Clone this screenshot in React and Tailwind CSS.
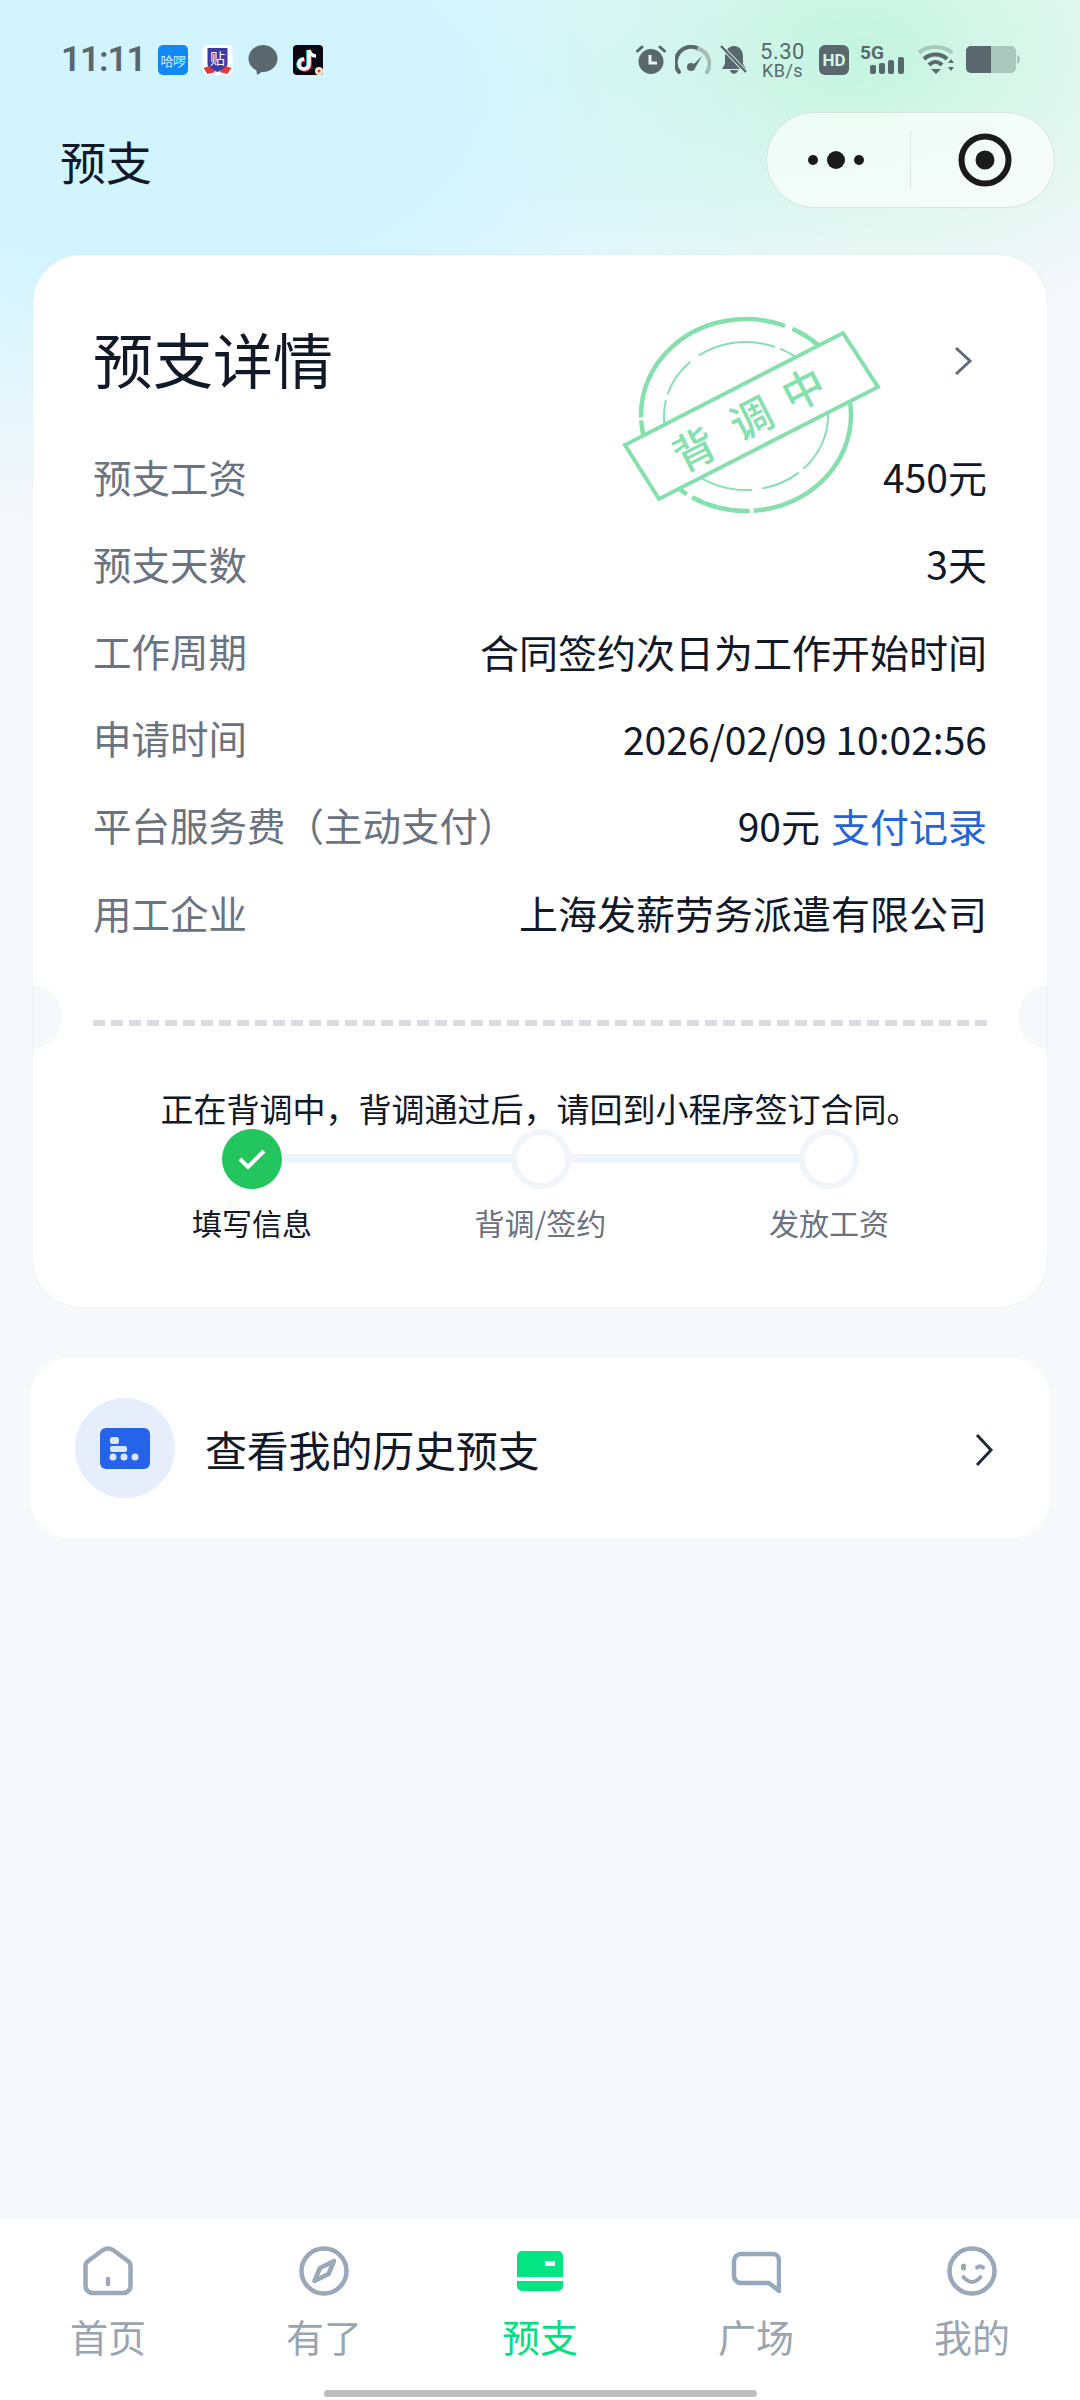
const font = "font-['Noto_Sans_CJK_SC','Noto_Sans',sans-serif]";

function AlarmIcon() {
  return (
    <svg width="30" height="30" viewBox="0 0 30 30" className="shrink-0">
      <circle cx="15" cy="16.5" r="12.5" fill="#59686c" />
      <path d="M1.5 6 L6 2 M28.5 6 L24 2" stroke="#59686c" strokeWidth="3" strokeLinecap="round" />
      <path d="M14 10 V18 H21" stroke="#e3f7f3" strokeWidth="3" fill="none" />
    </svg>
  );
}
function GaugeIcon() {
  return (
    <svg width="36" height="30" viewBox="0 0 36 30" className="shrink-0">
      <path d="M4 27 A15.5 15.5 0 0 1 24 4" stroke="#59686c" strokeWidth="4" fill="none" strokeLinecap="round" />
      <path d="M24 4 A15.5 15.5 0 0 1 32 27" stroke="#a6bdb6" strokeWidth="4" fill="none" strokeLinecap="round" />
      <path d="M14 24 L27 11 L19 25 Z" fill="#59686c" />
      <circle cx="16" cy="22" r="4" fill="#59686c" />
    </svg>
  );
}
function BellIcon() {
  return (
    <svg width="28" height="30" viewBox="0 0 28 30" className="shrink-0">
      <path d="M14 1 C20 1 23 6 23 12 V19 L26 24 H2 L5 19 V12 C5 6 8 1 14 1 Z" fill="#59686c" />
      <path d="M10 25 C11 30 17 30 18 25 Z" fill="#59686c" />
      <path d="M2 2 L27 28" stroke="#d2f5e9" strokeWidth="4" />
      <path d="M1 1 L26 27" stroke="#59686c" strokeWidth="2.4" />
    </svg>
  );
}
function SignalIcon() {
  return (
    <svg width="45" height="36" viewBox="0 -4 45 36" className="shrink-0">
      <text x="0" y="15" fontSize="19" fontWeight="700" fill="#59686c" fontFamily="Roboto, sans-serif">5G</text>
      <rect x="10" y="21" width="6" height="9" rx="2" fill="#59686c" />
      <rect x="19" y="19" width="6" height="11" rx="2" fill="#59686c" />
      <rect x="28" y="16" width="6" height="14" rx="2" fill="#59686c" />
      <rect x="38" y="13" width="6" height="17" rx="2" fill="#59686c" />
    </svg>
  );
}
function WifiIcon() {
  return (
    <svg width="37" height="30" viewBox="0 0 37 30" className="shrink-0">
      <path d="M1 8 C9 0 26 0 34 8" stroke="#a6c9bd" strokeWidth="4" fill="none" />
      <path d="M6 14 C12 8 23 8 29 14" stroke="#59686c" strokeWidth="4" fill="none" />
      <path d="M11 20 C15 16 20 16 24 20" stroke="#59686c" strokeWidth="4" fill="none" />
      <path d="M13 24 H23 L18 29 Z" fill="#59686c" />
      <path d="M30 18 L33 14 L36 18 Z M30 22 H36 L33 26 Z" fill="#59686c" />
    </svg>
  );
}
function BatteryIcon() {
  return (
    <svg width="54" height="28" viewBox="0 0 54 28" className="shrink-0">
      <rect x="0" y="0" width="50" height="27" rx="5" fill="#a9c7bc" />
      <path d="M5 0 H25 V27 H5 A5 5 0 0 1 0 22 V5 A5 5 0 0 1 5 0 Z" fill="#59686c" />
      <path d="M51 9 C53 10 54 11 54 13.5 C54 16 53 17 51 18 Z" fill="#a9c7bc" />
    </svg>
  );
}

function StatusBar() {
  return (
    <div className="h-[112px] pt-[45px] pl-[61px] pr-[60px] flex items-start justify-between shrink-0">
      <div className="flex items-center h-[30px]">
        <span className="w-[97px] text-[35px] leading-[32px] font-semibold tracking-[-1px] text-[#59686c] font-['Roboto',sans-serif] whitespace-nowrap">11:11</span>
        <div className="w-[30px] h-[30px] rounded-[5px] bg-[#1189f5] flex items-center justify-center text-[13px] tracking-[-0.5px] leading-none text-[#cdeaff] mr-[14px] whitespace-nowrap">哈啰</div>
        <svg width="31" height="30" viewBox="0 0 30 30" className="mr-[15px] shrink-0">
          <rect width="30" height="30" rx="5" fill="#ffffff" />
          <path d="M5 3 H25 V19 C25 23 19 25 15 27 C11 25 5 23 5 19 Z" fill="#3f3ba5" />
          <path d="M1 23 L7 21 L13 27 L5 29 Z M29 23 L23 21 L17 27 L25 29 Z" fill="#e23a3a" />
          <text x="15" y="19" textAnchor="middle" fontSize="15" fill="#ffffff">贴</text>
        </svg>
        <svg width="30" height="30" viewBox="0 0 30 30" className="mr-[15px] shrink-0">
          <ellipse cx="15" cy="13.5" rx="14.5" ry="13.5" fill="#59686c" />
          <path d="M8 22 L9 30 L17 25 Z" fill="#59686c" />
        </svg>
        <svg width="30" height="30" viewBox="0 0 30 30" className="shrink-0">
          <rect width="30" height="30" rx="4" fill="#0b0710" />
          <path d="M16 5 V19 A5 5 0 1 1 11 14" stroke="#25f4ee" strokeWidth="3.5" fill="none" transform="translate(-1 0)" />
          <path d="M16 5 V19 A5 5 0 1 1 11 14" stroke="#fe2c55" strokeWidth="3.5" fill="none" transform="translate(1 1)" />
          <path d="M16 5 V19 A5 5 0 1 1 11 14 M16 5 C17 9 20 11 23 11" stroke="#ffffff" strokeWidth="3.5" fill="none" />
          <circle cx="26" cy="26" r="4" fill="#ffe9d4" />
          <circle cx="26" cy="26" r="1.5" fill="#e23a3a" />
        </svg>
      </div>
      <div className="flex items-center h-[30px]">
        <AlarmIcon />
        <div className="ml-[9px]"><GaugeIcon /></div>
        <div className="ml-[9px]"><BellIcon /></div>
        <div className="ml-[11px] w-[47px] flex flex-col items-center text-[#59686c] font-['Roboto',sans-serif]">
          <span className="text-[22px] leading-[21px] tracking-[0.5px]">5.30</span>
          <span className="text-[18px] leading-[17px] tracking-[0.5px]">KB/s</span>
        </div>
        <div className="ml-[13px] w-[30px] h-[30px] rounded-[6px] bg-[#59686c] flex items-center justify-center text-[17px] leading-none font-bold text-[#d2f5e9] font-['Roboto',sans-serif]">HD</div>
        <div className="ml-[11px] mb-[4px]"><SignalIcon /></div>
        <div className="ml-[13px]"><WifiIcon /></div>
        <div className="ml-[11px]"><BatteryIcon /></div>
      </div>
    </div>
  );
}

function NavBar() {
  return (
    <div className="h-[143px] shrink-0 pl-[60px] pr-[25px] flex items-start justify-between">
      <span className="text-[46px] leading-[96px] text-[#111827]">预支</span>
      <div className="w-[289px] h-[96px] rounded-full bg-white/65 border border-[#d5e6e0] flex items-center">
        <div className="w-[143px] flex justify-center pr-[5px]">
          <svg width="60" height="20" viewBox="0 0 60 20">
            <circle cx="7" cy="10" r="5" fill="#1a1a1a" />
            <circle cx="30" cy="10" r="9" fill="#1a1a1a" />
            <circle cx="53" cy="10" r="5" fill="#1a1a1a" />
          </svg>
        </div>
        <div className="w-px h-[58px] bg-[#dbe6e2]" />
        <div className="flex-1 flex justify-center pl-[4px]">
          <svg width="54" height="54" viewBox="0 0 54 54">
            <circle cx="27" cy="27" r="23.5" stroke="#1a1a1a" strokeWidth="6" fill="none" />
            <circle cx="27" cy="27" r="9.5" fill="#1a1a1a" />
          </svg>
        </div>
      </div>
    </div>
  );
}

function Stamp() {
  const c = "#86e0ae";
  return (
    <svg width="270" height="210" viewBox="620 312 270 210" className="absolute left-[587px] top-[57px]">
      <ellipse cx="746" cy="415" rx="105" ry="96" stroke={c} strokeWidth="4.5" fill="none" strokeDasharray="150 4 60 6 90 3 200 8" />
      <ellipse cx="746" cy="416" rx="82" ry="74" stroke={c} strokeWidth="2" fill="none" strokeDasharray="60 6 40 10 80 5" />
      <polygon points="625,445 843,333 878,387 659,499" fill="#ffffff" stroke={c} strokeWidth="4" />
      <text x="693" y="447" fontSize="42" fill={c} textAnchor="middle" dominantBaseline="central" fontWeight="500" transform="rotate(-27 693 447)">背</text>
      <text x="750" y="416" fontSize="42" fill={c} textAnchor="middle" dominantBaseline="central" fontWeight="500" transform="rotate(-27 750 416)">调</text>
      <text x="802" y="387" fontSize="42" fill={c} textAnchor="middle" dominantBaseline="central" fontWeight="500" transform="rotate(-27 802 387)">中</text>
    </svg>
  );
}

const rows = [
  ["预支工资", "450元"],
  ["预支天数", "3天"],
  ["工作周期", "合同签约次日为工作开始时间"],
  ["申请时间", "2026/02/09 10:02:56"],
  ["平台服务费（主动支付）", "90元"],
  ["用工企业", "上海发薪劳务派遣有限公司"],
];

function Dashes() {
  return <div className="h-[6px] ml-[60px] mr-[59px] bg-[repeating-linear-gradient(90deg,#d9dde3_0,#d9dde3_12px,transparent_12px,transparent_18px)]" />;
}

function DetailCard() {
  return (
    <div className="relative mx-[33px] h-[1052px] rounded-[48px] bg-white overflow-hidden shrink-0 shadow-[0_0_2px_rgba(200,215,225,0.35)]">
      <div className="pl-[60px] pr-[60px] pt-[63px]">
        <div className="flex items-center justify-between h-[80px] pr-[14px]">
          <span className="text-[60px] leading-[80px] text-[#111827]">预支详情</span>
          <svg width="20" height="32" viewBox="0 0 20 32" className="mt-[5px]">
            <path d="M3 3 L17 16 L3 29" stroke="#5f6b7a" strokeWidth="3" fill="none" />
          </svg>
        </div>
        <div className="mt-[35px] flex flex-col gap-[0.2px]">
          {rows.map(([k, v], i) => (
            <div key={k} className="h-[87px] flex items-center justify-between">
              <span className="text-[#6b7280] text-[38.5px]">{k}</span>
              <span className="text-[#111827] text-[39px]">
                {v}
                {i === 4 && <span className="text-[#2563d6] ml-[11px]">支付记录</span>}
              </span>
            </div>
          ))}
        </div>
      </div>
      <div className="mt-[64px]"><Dashes /></div>
      <div className="mt-[62px] h-[41px] flex items-center justify-center text-[33px] leading-[40px] text-[#111827] whitespace-nowrap">正在背调中，背调通过后，请回到小程序签订合同。</div>
      <div className="flex items-center w-[637px] ml-[189px]">
        <div className="w-[60px] h-[60px] rounded-full bg-[#22c55e] flex items-center justify-center shrink-0">
          <svg width="30" height="24" viewBox="0 0 30 24">
            <path d="M3 12 L11 20 L27 4" stroke="#ffffff" strokeWidth="4" fill="none" />
          </svg>
        </div>
        <div className="flex-1 h-[9px] bg-[#f1f4f8]" />
        <div className="w-[60px] h-[60px] rounded-full border-[6px] border-[#f1f4f8] bg-white shrink-0" />
        <div className="flex-1 h-[9px] bg-[#f1f4f8]" />
        <div className="w-[60px] h-[60px] rounded-full border-[6px] border-[#f1f4f8] bg-white shrink-0" />
      </div>
      <div className="flex ml-[75px] mt-[13px] text-[30px] leading-[40px] text-center">
        <div className="w-[288px] text-[#111827]">填写信息</div>
        <div className="w-[289px] text-[#6b7280]">背调/签约</div>
        <div className="w-[288px] text-[#6b7280]">发放工资</div>
      </div>
      <div className="absolute -left-[33px] top-[730px] w-[62px] h-[64px] rounded-full bg-[#f6f8fa]" />
      <div className="absolute -right-[33px] top-[730px] w-[62px] h-[64px] rounded-full bg-[#f6f8fa]" />
      <Stamp />
    </div>
  );
}

function HistoryCard() {
  return (
    <div className="mt-[51px] mx-[30px] h-[180px] rounded-[40px] bg-white flex items-center pl-[45px] pr-[55px] shrink-0">
      <div className="w-[100px] h-[100px] rounded-full bg-[#e6eefc] flex items-center justify-center shrink-0">
        <svg width="50" height="41" viewBox="0 0 50 41">
          <rect width="50" height="41" rx="6" fill="#2563eb" />
          <rect x="10" y="9" width="9" height="7" rx="2.5" fill="#dbe6fb" />
          <rect x="10" y="18" width="17" height="6" rx="2" fill="#dbe6fb" />
          <circle cx="13" cy="29" r="3.5" fill="#dbe6fb" />
          <circle cx="24" cy="29" r="3.5" fill="#dbe6fb" />
          <circle cx="35" cy="29" r="3.5" fill="#dbe6fb" />
        </svg>
      </div>
      <span className="ml-[30px] flex-1 text-[42px] tracking-[-0.2px] text-[#111827]">查看我的历史预支</span>
      <svg width="24" height="34" viewBox="0 0 24 34" className="mt-[4px]">
        <path d="M6 2 L20 17 L6 32" stroke="#1f2937" strokeWidth="3" fill="none" />
      </svg>
    </div>
  );
}

const tabIcons = {
  home: (
    <path d="M2.5 20 Q2.5 17 5 15 L20 4 Q25 1 30 4 L45 15 Q47.5 17 47.5 20 V40 A7 7 0 0 1 40.5 47 H9.5 A7 7 0 0 1 2.5 40 Z M25 33 V38" stroke="#9aa8ba" strokeWidth="4.5" fill="none" strokeLinejoin="round" strokeLinecap="round" />
  ),
  compass: (
    <g stroke="#9aa8ba" strokeWidth="4.5" fill="none" strokeLinejoin="round">
      <circle cx="25" cy="25" r="22.5" />
      <path d="M35 15 L29.5 28 L15.5 35 L21 22 Z" />
    </g>
  ),
  wallet: (
    <g>
      <path d="M7 5 H43 A5 5 0 0 1 48 10 V31 H2 V10 A5 5 0 0 1 7 5 Z" fill="#03e582" />
      <path d="M2 35 H48 V40 A5 5 0 0 1 43 45 H7 A5 5 0 0 1 2 40 Z" fill="#03e582" />
      <rect x="30" y="15" width="10" height="5" fill="#ffffff" />
    </g>
  ),
  chat: (
    <path d="M10 8 H42 A6 6 0 0 1 48 14 V45 L38 37 H10 A7 7 0 0 1 3 30 V15 A7 7 0 0 1 10 8 Z" stroke="#96a8bd" strokeWidth="4.5" fill="none" strokeLinejoin="round" />
  ),
  smile: (
    <g stroke="#9aa8ba" strokeWidth="4.5" fill="none" strokeLinecap="round">
      <circle cx="25" cy="25" r="22.5" />
      <path d="M16.5 31 Q25 41 33.5 31" strokeWidth="4" />
      <path d="M16.5 20 V22" strokeWidth="5" />
      <path d="M30 21.5 Q33 19 36 21.5" strokeWidth="4" />
    </g>
  ),
};

const tabs = [
  ["首页", "home"],
  ["有了", "compass"],
  ["预支", "wallet"],
  ["广场", "chat"],
  ["我的", "smile"],
];

function TabBar() {
  return (
    <div className="relative h-[181px] bg-white shrink-0 flex pt-[27px]">
      {tabs.map(([label, icon], i) => (
        <div key={label} className="w-[216px] flex flex-col items-center">
          <svg width="50" height="50" viewBox="0 0 50 50">{tabIcons[icon]}</svg>
          <span className={`mt-[15px] text-[38px] leading-[50px] ${i === 2 ? "text-[#03de7f]" : "text-[#9aa5b3]"}`}>{label}</span>
        </div>
      ))}
      <div className="absolute left-[324px] bottom-[3px] w-[433px] h-[7px] rounded-full bg-[#bdbdbd]" />
    </div>
  );
}

export default function App() {
  return (
    <div className={`${font} w-[1080px] h-[2400px] flex flex-col overflow-hidden bg-[#f6f8fa]`}>
      <div className="flex-1 flex flex-col bg-[radial-gradient(ellipse_400px_280px_at_860px_50px,#c3f5e0_0%,rgba(200,245,226,0)_100%),radial-gradient(ellipse_720px_430px_at_180px_100px,#d2f4fe_40%,rgba(220,244,250,0)_100%)]">
        <StatusBar />
        <NavBar />
        <DetailCard />
        <HistoryCard />
      </div>
      <TabBar />
    </div>
  );
}
